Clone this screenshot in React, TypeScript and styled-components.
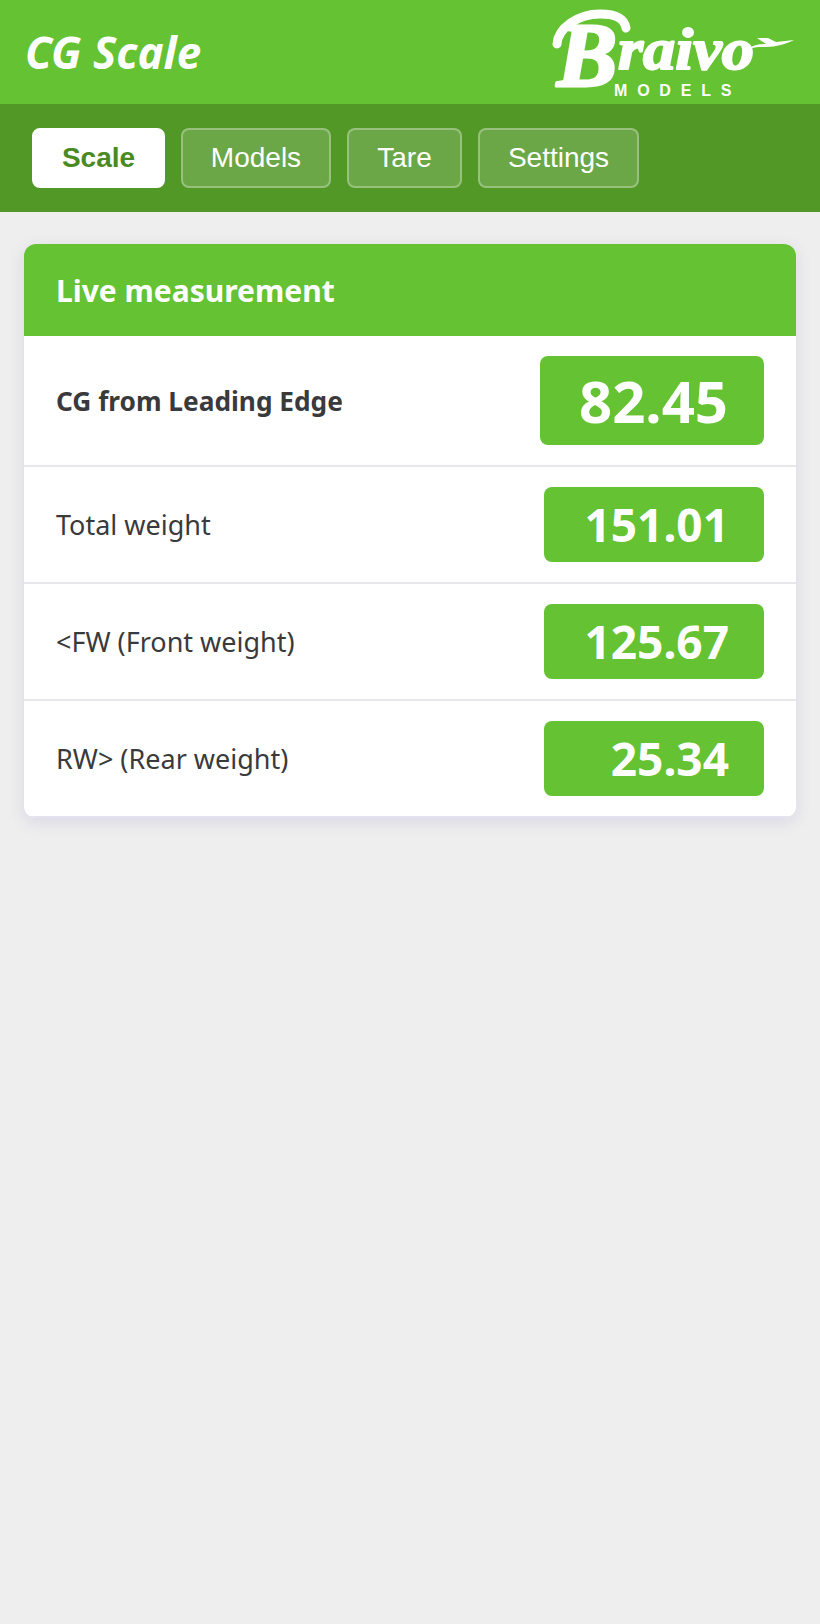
import styled, { createGlobalStyle } from 'styled-components';

const green = '#65c232';
const darkGreen = '#529826';
const bodyFont = '"Noto Sans", "Open Sans", sans-serif';

const GlobalStyle = createGlobalStyle`
    html,
    body {
        margin: 0;
        padding: 0;
        background: #eeeeee;
    }

    body {
        min-height: 1624px;
        font-family: ${bodyFont};
    }
`;

const TopBar = styled.header`
    height: 104px;
    background: ${green};
    display: flex;
    align-items: flex-start;
    justify-content: space-between;
    padding: 0 26px 0 25px;
    box-sizing: border-box;
`;

const Title = styled.h1`
    margin: 22px 0 0;
    font-size: 44px;
    line-height: 60px;
    font-style: italic;
    font-weight: 700;
    color: #ffffff;
`;

const Logo = styled.svg`
    width: 252px;
    height: 100px;
    display: block;
    margin-right: 0;
`;

const NavBar = styled.nav`
    height: 108px;
    background: ${darkGreen};
    display: flex;
    align-items: center;
    gap: 16px;
    padding: 0 32px;
    box-sizing: border-box;
`;

const Tab = styled.button<{ $active?: boolean; $width: number }>`
    width: ${({ $width }) => $width}px;
    height: 60px;
    padding: 0;
    box-sizing: border-box;
    border-radius: 8px;
    border: 2px solid ${({ $active }) => ($active ? '#ffffff' : 'rgba(255, 255, 255, 0.3)')};
    background: ${({ $active }) => ($active ? '#ffffff' : 'rgba(255, 255, 255, 0.15)')};
    color: ${({ $active }) => ($active ? '#4a8a22' : '#ffffff')};
    font-family: 'Liberation Sans', Arial, sans-serif;
    font-size: 28px;
    font-weight: ${({ $active }) => ($active ? 700 : 400)};
`;

const Main = styled.main`
    padding: 32px 24px;
`;

const Card = styled.section`
    background: #ffffff;
    border-radius: 12px;
    overflow: hidden;
    box-shadow: 0 4px 16px rgba(90, 80, 170, 0.14);
`;

const CardHeader = styled.h2`
    margin: 0;
    height: 92px;
    padding: 0 32px;
    display: flex;
    align-items: center;
    background: ${green};
    color: #ffffff;
    font-size: 30px;
    font-weight: 700;
`;

const Row = styled.div`
    display: flex;
    align-items: center;
    justify-content: space-between;
    padding: 20px 32px;
    border-bottom: 2px solid #e8e8ec;

    &:last-child {
        border-bottom-color: #e4e2ee;
    }
`;

const Label = styled.span<{ $strong?: boolean }>`
    color: #3a3a3c;
    font-size: ${({ $strong }) => ($strong ? 26.25 : 27)}px;
    font-weight: ${({ $strong }) => ($strong ? 700 : 400)};
`;

const Value = styled.output<{ $large?: boolean }>`
    display: block;
    box-sizing: border-box;
    width: ${({ $large }) => ($large ? 224 : 220)}px;
    height: ${({ $large }) => ($large ? 89 : 75)}px;
    line-height: ${({ $large }) => ($large ? 89 : 75)}px;
    padding-right: ${({ $large }) => ($large ? 36 : 35)}px;
    border-radius: 8px;
    background: ${green};
    color: #ffffff;
    text-align: right;
    font-size: ${({ $large }) => ($large ? 58 : 46)}px;
    font-weight: 700;
`;

const tabs = [
    { name: 'Scale', width: 133, active: true },
    { name: 'Models', width: 150 },
    { name: 'Tare', width: 115 },
    { name: 'Settings', width: 161 },
];

const rows = [
    { label: 'CG from Leading Edge', value: '82.45', large: true },
    { label: 'Total weight', value: '151.01' },
    { label: '<FW (Front weight)', value: '125.67' },
    { label: 'RW> (Rear weight)', value: '25.34' },
];

export default function App() {
    return (
        <>
            <GlobalStyle />
            <TopBar>
                <Title>CG Scale</Title>
                <Logo viewBox="-12 0 252 100">
                    {/* swash over the B */}
                    <path
                        d="M3 44 C4 28 24 14 46 14 C58 14 70 16 72 28"
                        fill="none"
                        stroke="#fff"
                        strokeWidth="9"
                        strokeLinecap="round"
                    />
                    <text
                        x="3"
                        y="86"
                        fill="#fff"
                        stroke="#fff"
                        strokeWidth="3"
                        strokeLinejoin="round"
                        fontFamily="'Liberation Serif', serif"
                        fontStyle="italic"
                        fontWeight="700"
                        fontSize="90"
                    >
                        B
                    </text>
                    <text
                        x="64"
                        y="69"
                        fill="#fff"
                        stroke="#fff"
                        strokeWidth="2"
                        strokeLinejoin="round"
                        fontFamily="'Liberation Serif', serif"
                        fontStyle="italic"
                        fontWeight="700"
                        fontSize="60"
                        textLength="136"
                        lengthAdjust="spacingAndGlyphs"
                    >
                        raivo
                    </text>
                    <path
                        d="M203 38 L214 38 L222 42 L240 40 C232 44 222 47 212 47 C206 47 200 47 195 49 C198 45 206 44 212 44 Z"
                        fill="#fff"
                    />
                    <text
                        x="60"
                        y="96"
                        fill="#fff"
                        fontFamily="'Liberation Sans', sans-serif"
                        fontWeight="700"
                        fontSize="16"
                        letterSpacing="9.8"
                    >
                        MODELS
                    </text>
                </Logo>
            </TopBar>
            <NavBar>
                {tabs.map((tab) => (
                    <Tab key={tab.name} $active={tab.active} $width={tab.width}>
                        {tab.name}
                    </Tab>
                ))}
            </NavBar>
            <Main>
                <Card>
                    <CardHeader>Live measurement</CardHeader>
                    {rows.map((row) => (
                        <Row key={row.label}>
                            <Label $strong={row.large}>{row.label}</Label>
                            <Value $large={row.large}>{row.value}</Value>
                        </Row>
                    ))}
                </Card>
            </Main>
        </>
    );
}
